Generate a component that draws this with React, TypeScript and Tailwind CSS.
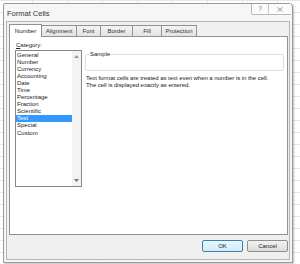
import React from 'react'

const categories = [
  'General',
  'Number',
  'Currency',
  'Accounting',
  'Date',
  'Time',
  'Percentage',
  'Fraction',
  'Scientific',
  'Text',
  'Special',
  'Custom',
]

const tabs = [
  { label: 'Number', w: 'w-[33px]' },
  { label: 'Alignment', w: 'w-[36px]' },
  { label: 'Font', w: 'w-[25px]' },
  { label: 'Border', w: 'w-[33px]' },
  { label: 'Fill', w: 'w-[30px]' },
  { label: 'Protection', w: 'w-[36px]' },
]

export default function App() {
  const selected = 'Text'

  return (
    <div className="w-[300px] h-[264px] overflow-hidden bg-white bg-[linear-gradient(to_right,#e6e6e6_1px,transparent_1px),linear-gradient(to_bottom,#e6e6e6_1px,transparent_1px)] bg-[size:35px_12px] bg-[position:32px_0] pt-[3px] pl-[3px] font-['Liberation_Sans',Arial,sans-serif] text-[#222]">
      {/* Dialog window */}
      <div className="w-[290px] h-[260px] flex flex-col border border-[#9a9a9a] rounded-tr-[4px] rounded-tl-[2px] bg-[#f6f6f6] shadow-[1px_1px_2px_rgba(0,0,0,0.25)]">
        {/* Title bar */}
        <div className="h-[17px] flex items-start justify-between">
          <span className="mt-[5px] ml-[3px] text-[7.5px] leading-[9px] text-[#333]">Format Cells</span>
          <div className="flex h-[11px] mr-[1px] border-l border-b border-[#b8b8b8] rounded-bl-[2px] bg-[#fbfbfb]">
            <div className="w-[17px] flex items-center justify-center border-r border-[#c8c8c8] text-[6.5px] text-[#777]">?</div>
            <div className="w-[22px] flex items-center justify-center">
              <svg width="6" height="5" viewBox="0 0 6 5">
                <path d="M0.5 0.5 L5.5 4.5 M5.5 0.5 L0.5 4.5" stroke="#888" strokeWidth="0.9" fill="none" />
              </svg>
            </div>
          </div>
        </div>

        {/* Inner client area */}
        <div className="flex-1 mx-[2px] mb-[2px] border border-[#b4b4b4] bg-[#f0f0f0] flex flex-col pl-[2px]">
          {/* Tabs */}
          <div className="flex items-end h-[14px] pt-[2px]">
            {tabs.map((t, i) =>
              i === 0 ? (
                <div
                  key={t.label}
                  className={`${t.w} h-[13px] relative z-10 -mb-[1px] flex items-center justify-center border border-b-0 border-[#8d9199] bg-white text-[6px] leading-[7px] rounded-t-[1px]`}
                >
                  {t.label}
                </div>
              ) : (
                <div
                  key={t.label}
                  className={`${t.w} h-[11px] -ml-[1px] flex items-center justify-center border border-b-0 border-[#8d9199] bg-[linear-gradient(#f3f3f3,#e3e3e3)] text-[6px] leading-[7px] text-[#333] rounded-t-[1px]`}
                >
                  {t.label}
                </div>
              )
            )}
          </div>

          {/* Tab panel */}
          <div className="w-[279px] h-[199px] border border-[#8d9199] bg-white flex pt-[4px] pl-[5px]">
            {/* Category column */}
            <div className="flex flex-col w-[67px]">
              <span className="text-[6px] leading-[8px] ml-[1px]">
                <span className="underline">C</span>ategory:
              </span>
              <div className="mt-[1px] h-[137px] border border-[#828790] flex">
                <div className="flex-1 flex flex-col pt-[0.5px]">
                  {categories.map((c) => (
                    <div
                      key={c}
                      className={`h-[7.1px] leading-[7.1px] text-[6px] pl-[1px] ${
                        c === selected ? 'bg-[#3399ff] text-white' : ''
                      }`}
                    >
                      {c}
                    </div>
                  ))}
                </div>
                <div className="w-[9px] bg-[#f3f3f3] flex flex-col justify-between items-center py-[4px]">
                  <svg width="5" height="3" viewBox="0 0 5 3">
                    <path d="M0 3 L2.5 0 L5 3 Z" fill="#999" />
                  </svg>
                  <svg width="5" height="3" viewBox="0 0 5 3">
                    <path d="M0 0 L2.5 3 L5 0 Z" fill="#777" />
                  </svg>
                </div>
              </div>
            </div>

            {/* Right column */}
            <div className="flex flex-col ml-[3px] pt-[13px] w-[199px]">
              <div className="relative h-[17px] border border-[#d8dfe6] rounded-[2px]">
                <span className="absolute -top-[5px] left-[3px] bg-white px-[1px] text-[6px] leading-[8px]">Sample</span>
              </div>
              <p className="mt-[4px] ml-[1px] text-[6px] leading-[7px] tracking-[-0.05px]">
                Text format cells are treated as text even when a number is in the cell.
                <br />
                The cell is displayed exactly as entered.
              </p>
            </div>
          </div>

          {/* Buttons */}
          <div className="flex justify-end gap-[4px] w-[279px] mt-[5px]">
            <button className="w-[41px] h-[12px] border border-[#3c7fb1] rounded-[2px] bg-[linear-gradient(#eaf6fd,#d3ecfa)] text-[6px] leading-[7px]">
              OK
            </button>
            <button className="w-[41px] h-[12px] border border-[#8e8e8e] rounded-[2px] bg-[linear-gradient(#f2f2f2,#dcdcdc)] text-[6px] leading-[7px]">
              Cancel
            </button>
          </div>
        </div>
      </div>
    </div>
  )
}
